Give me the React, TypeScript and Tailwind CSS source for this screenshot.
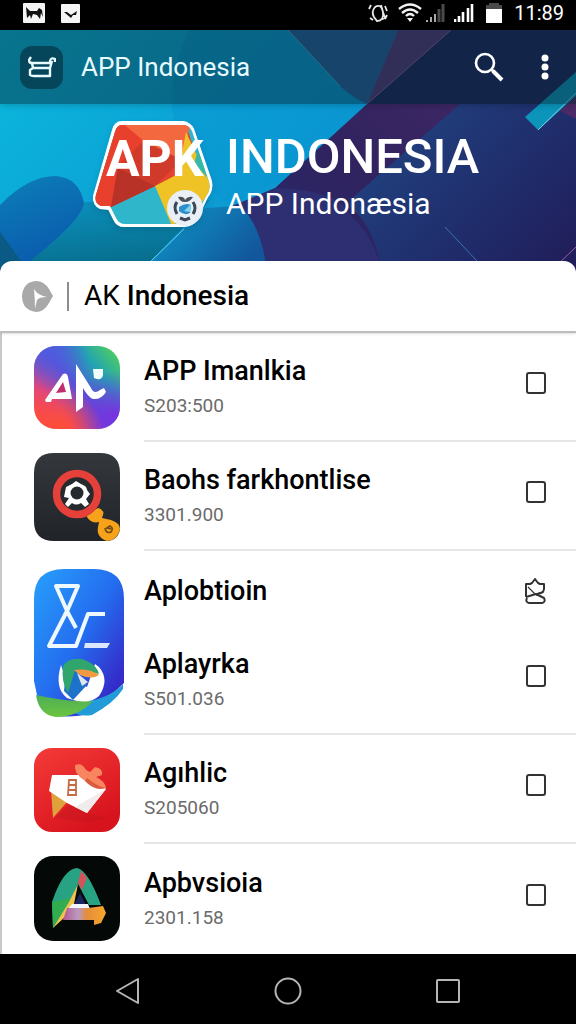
import type { ReactNode } from "react";

const ManLogo = () => (
  <svg viewBox="0 0 86 83" className="w-[86px]" aria-hidden="true">
    <defs>
      <linearGradient id="m1" x1="0" y1="0.9" x2="1" y2="0.1">
        <stop offset="0" stopColor="#ff4a3d" />
        <stop offset="0.25" stopColor="#e0457f" />
        <stop offset="0.5" stopColor="#5a4fd8" />
        <stop offset="0.75" stopColor="#22a3b4" />
        <stop offset="1" stopColor="#4fd05c" />
      </linearGradient>
      <radialGradient id="m2" cx="0.95" cy="0.85" r="0.55">
        <stop offset="0" stopColor="#7a2fe0" />
        <stop offset="1" stopColor="#7a2fe0" stopOpacity="0" />
      </radialGradient>
      <radialGradient id="m3" cx="0.3" cy="1" r="0.5">
        <stop offset="0" stopColor="#ff4f35" />
        <stop offset="1" stopColor="#ff4f35" stopOpacity="0" />
      </radialGradient>
      <radialGradient id="m4" cx="0.15" cy="0.05" r="0.5">
        <stop offset="0" stopColor="#4f5be0" />
        <stop offset="1" stopColor="#4f5be0" stopOpacity="0" />
      </radialGradient>
    </defs>
    <rect width="86" height="83" rx="22" fill="url(#m1)" />
    <rect width="86" height="83" rx="22" fill="url(#m2)" />
    <rect width="86" height="83" rx="22" fill="url(#m3)" />
    <rect width="86" height="83" rx="22" fill="url(#m4)" />
    <path d="M11 54 L29 28 Q33 26 34 31 L38 53 L18 53 L17 56 L12 56 Z" fill="#fff" />
    <path d="M22 47 L32 46 L29 36 Z" fill="#c02d6e" />
    <path d="M42 18 L57 42 Q60 49 66 44 L70 42 L72 46 Q67 54 59 53 Q54 51 49 42 L49 61 L42 66 Z" fill="#fff" />
    <path d="M59 23 L69 23 L69 29 Q68 34 63 33 L60 32 Z" fill="#f2fffc" />
  </svg>
);

const BaohaLogo = () => (
  <svg viewBox="0 0 86 88" className="w-[86px]" aria-hidden="true">
    <defs>
      <linearGradient id="b1" x1="0" y1="0" x2="0" y2="1">
        <stop offset="0" stopColor="#34383c" />
        <stop offset="1" stopColor="#202327" />
      </linearGradient>
    </defs>
    <path d="M20 0 H66 Q86 0 86 20 V76 Q84 88 72 88 H20 Q0 88 0 68 V20 Q0 0 20 0 Z" fill="url(#b1)" />
    <path d="M53 61 L64 55 Q72 57 68 65 L77 67 Q86 70 86 76 Q83 88 73 88 Q62 84 64 74 L65 69 Q57 71 53 64 Z" fill="#f6a21b" />
    <circle cx="43" cy="41" r="20.5" fill="#252a2f" stroke="#e5403a" strokeWidth="7.5" />
    <path d="M38 31 L42 28 L47 31 Q53 33 53 37 L56 41 L52 46 L55 51 L51 54 L47 50 Q42 53 38 50 L34 54 L31 51 L35 45 L30 44 L32 34 Z" fill="#fff" />
    <circle cx="43" cy="40" r="6.5" fill="#252a2f" />
    <path d="M71 75 Q72 81 77 79 Q80 75 76 73 L73 75 L77 76" fill="none" stroke="#704a13" strokeWidth="1.7" />
  </svg>
);

const TallLogo = () => (
  <svg viewBox="0 0 90 148" className="w-[90px]" aria-hidden="true">
    <defs>
      <linearGradient id="t1" x1="0" y1="0" x2="1" y2="1">
        <stop offset="0" stopColor="#27a0fb" />
        <stop offset="0.5" stopColor="#246cef" />
        <stop offset="0.85" stopColor="#352bc8" />
      </linearGradient>
      <linearGradient id="t2" x1="0" y1="0" x2="0" y2="1">
        <stop offset="0" stopColor="#4fae57" />
        <stop offset="1" stopColor="#6bc53f" />
      </linearGradient>
    </defs>
    <path d="M0 30 Q0 0 30 0 H60 Q90 0 90 30 V114 L58 144 Q36 150 18 146 Q4 143 3 126 L0 112 Z" fill="url(#t1)" />
    <path d="M89 115 L89 120 Q80 134 58 146 Q45 148 38 142 L48 133 Q75 130 89 115 Z" fill="#239bd8" />
    <path d="M2 126 Q25 131 42 132 L59 132 Q44 148 22 148 Q5 146 2 126 Z" fill="url(#t2)" />
    <path d="M42 59 L34 44 L22 17 H44 L34 40 L15 77 H42 L54 45 H71" fill="none" stroke="#eef8ff" strokeWidth="4" strokeLinejoin="round" />
    <path d="M51 74 H76 L73 79 H50 Z" fill="#dce7ff" />
    <path d="M27 96 Q20 119 33 129 Q54 137 65 127 Q76 111 65 98 L61 95 L53 118 L30 105 Z" fill="#fff" />
    <path d="M32 101 L41 99 L53 116 L39 131 L30 122 Z" fill="#1e72ca" />
    <path d="M29 97 Q36 87 51 91 Q63 96 65 105 L41 101 L34 124 Q27 113 29 97 Z" fill="#30a56d" />
    <path d="M40 101 Q55 99 65 106 Q58 111 46 106 Z" fill="#f19a42" />
    <path d="M43 104 L54 113 L48 117 Z" fill="#dce7ef" />
  </svg>
);

const RedLogo = () => (
  <svg viewBox="0 0 86 84" className="w-[86px]" aria-hidden="true">
    <defs>
      <linearGradient id="r1" x1="0" y1="0" x2="0.6" y2="1">
        <stop offset="0" stopColor="#f43b38" />
        <stop offset="1" stopColor="#d7131d" />
      </linearGradient>
    </defs>
    <rect width="86" height="84" rx="18" fill="url(#r1)" />
    <path d="M21 70 L35 57 L54 65 L74 70 Q60 76 34 72 Z" fill="#b80f19" opacity="0.3" />
    <path d="M17 42 L34 53 L19 70 Z" fill="#dfa13b" />
    <path d="M18 27 L53 27 L72 41 L53 65 L33 55 L15 43 Z" fill="#fff" />
    <path d="M72 41 L53 65 L41 59 Z" fill="#f1eceb" />
    <path d="M41 17 Q48 14 52 22 L56 24 L61 19 Q69 20 68 27 L62 29 Q71 33 72 40 Q61 44 50 32 Q40 26 41 17 Z" fill="#f8855f" />
    <path d="M53 30 Q63 38 71 40 Q61 43 51 33 Z" fill="#d95c41" />
    <path d="M35 32 H42 V47 H34 Z M35 37 H42 M35 42 H42" fill="none" stroke="#c26b46" strokeWidth="1.8" />
  </svg>
);

const DarkLogo = () => (
  <svg viewBox="0 0 86 85" className="w-[86px]" aria-hidden="true">
    <defs>
      <linearGradient id="d1" x1="0" y1="0" x2="1" y2="0">
        <stop offset="0" stopColor="#b5578c" />
        <stop offset="0.35" stopColor="#b99ac5" />
        <stop offset="0.55" stopColor="#e58d3c" />
        <stop offset="1" stopColor="#f7a72b" />
      </linearGradient>
    </defs>
    <rect width="86" height="85" rx="19" fill="#040806" />
    <path d="M18 46 Q29 13 43 12 Q54 14 67 49 H55 L44 28 L34 50 L19 72 Z" fill="#27a282" />
    <path d="M18 46 L38 42 L19 72 Z" fill="#31ac4f" />
    <path d="M44 28 L40 48 L31 61 L19 72 L35 46 Z" fill="#f1c34b" />
    <path d="M44 27 L47 15 L53 22 L48 34 Z" fill="#d5525a" />
    <path d="M46 37 L52 49 H40 Z" fill="#1b2460" />
    <path d="M38 48 H54 L56 53 H34 Z" fill="#f2f5ff" />
    <path d="M33 52 H54 L69 50 L72 57 L67 67 L60 69 V64 H29 Z" fill="url(#d1)" />
  </svg>
);

const Backdrop = () => (
  <svg
    viewBox="0 30 576 243"
    preserveAspectRatio="xMidYMid slice"
    className="absolute inset-0 h-full w-full"
    aria-hidden="true"
  >
    <defs>
      <linearGradient id="cy" x1="0" y1="0" x2="1" y2="0.4">
        <stop offset="0" stopColor="#0bb9dd" />
        <stop offset="0.6" stopColor="#0c9ad2" />
        <stop offset="1" stopColor="#0a86c0" />
      </linearGradient>
      <linearGradient id="nv" x1="0" y1="0" x2="1" y2="1">
        <stop offset="0" stopColor="#22508c" />
        <stop offset="0.6" stopColor="#20306f" />
        <stop offset="1" stopColor="#201c58" />
      </linearGradient>
      <linearGradient id="pp" x1="1" y1="0" x2="0" y2="1">
        <stop offset="0" stopColor="#4a2b69" />
        <stop offset="0.6" stopColor="#30235f" />
        <stop offset="1" stopColor="#232a6c" />
      </linearGradient>
      <linearGradient id="bl" x1="0" y1="0" x2="0.4" y2="1">
        <stop offset="0" stopColor="#0b7fb8" />
        <stop offset="1" stopColor="#0b5bad" />
      </linearGradient>
      <linearGradient id="tl" x1="0" y1="0" x2="0.3" y2="1">
        <stop offset="0" stopColor="#0b8fbd" />
        <stop offset="1" stopColor="#066079" />
      </linearGradient>
      <linearGradient id="md" x1="0" y1="0" x2="1" y2="0.5">
        <stop offset="0" stopColor="#0da0d0" />
        <stop offset="1" stopColor="#12579b" />
      </linearGradient>
    </defs>
    <rect y="30" width="576" height="243" fill="url(#cy)" />
    <path d="M172 104 Q176 170 230 205 L300 170 L367 104 L288 30 H190 Q172 60 172 104 Z" fill="#0895d2" opacity="0.5" />
    <path d="M60 200 L84 202 L210 200 L151 261 L140 273 H0 Z" fill="url(#tl)" opacity="0.8" />
    <path d="M0 205 Q28 176 56 176 Q80 178 84 204 Q80 222 24 266 L0 238 Z" fill="url(#bl)" />
    <path d="M0 232 L30 273 H0 Z" fill="#0a5a85" />
    <path d="M367 104 L451 30 H576 V273 H230 L236 206 L275 188 Z" fill="url(#pp)" />
    <path d="M230 273 L232 206 L275 188 Q340 190 350 215 Q374 235 382 273 Z" fill="#2d2f72" />
    <path d="M350 200 L405 152 L460 104 L535 30 H576 V273 H382 Q374 224 350 208 Z" fill="url(#nv)" />
    <path d="M140 273 L205 208 L240 206 Q262 226 267 273 Z" fill="url(#md)" />
    <path d="M288 30 L340 86 Q353 98 367 104 L398 30 Z" fill="#27619f" />
    <path d="M398 30 L367 104 L451 30 Z" fill="#563a7a" />
    <path d="M451 30 L367 104 H576 V30 Z" fill="#1e2860" />
    <path d="M576 72 L525 117 L538 130 L576 96 Z" fill="#0c94bb" />
    <path d="M576 96 L560 111 L576 119 Z" fill="#4b2a65" />
    <path d="M538 130 L576 93" stroke="#7bd3ee" strokeWidth="1" />
    <path d="M288 30 L340 86" stroke="#4aa6c9" strokeWidth="1" />
    <path d="M451 30 L367 104" stroke="#8c60a0" strokeWidth="1" />
    <path d="M151 261 L184 229" stroke="#63cdf0" strokeWidth="1" />
    <path d="M445 227 L477 261" stroke="#3a73b4" strokeWidth="1" />
    <path d="M558 264 L576 247" stroke="#a05c9c" strokeWidth="1" />
  </svg>
);

const BannerLogo = () => (
  <svg viewBox="90 118 126 112" className="w-[126px] shrink-0 drop-shadow-md" role="img" aria-label="APK">
    <defs>
      <clipPath id="badge">
        <path d="M122 125 H183 Q189 125 192 131 L209 182 Q211 190 206 196 L195 219 Q191 224 184 224 H125 Q119 224 116 218 L110 206 L101 206 Q94 203 96 195 L115 132 Q117 125 122 125 Z" />
      </clipPath>
    </defs>
    <path
      d="M122 122 H183 Q190 123 193 129 L211 181 Q213 190 207 197 L196 220 Q192 226 184 226 H124 Q117 226 114 219 L109 209 L100 208 Q93 204 94 196 L113 130 Q115 122 122 122 Z"
      fill="#fff"
      stroke="#fff"
      strokeWidth="2"
    />
    <g clipPath="url(#badge)">
      <rect x="90" y="118" width="126" height="112" fill="#2fb6cb" />
      <path d="M116 118 L90 210 L111 207 L155 186 L200 168 L184 118 Z" fill="#e3432f" />
      <path d="M118 126 L144 141 L144 166 L182 160 L192 118 H118 Z" fill="#f4683f" />
      <path d="M113 160 L144 141 L182 160 L155 186 L111 207 Z" fill="#cf3a2b" />
      <path d="M116 118 L90 210 L111 207 L118 165 L144 141 Z" fill="#e8402c" />
      <path d="M118 168 L155 186 L111 207 Z" fill="#b93227" />
      <path d="M186 132 L178 174 L155 186 L172 226 L214 192 Z" fill="#efc225" />
      <path d="M198 150 L194 164 L208 178 Z" fill="#38b9a8" />
    </g>
    <text x="106" y="176" fill="#fff" fontFamily="Roboto, sans-serif" fontWeight="700" fontSize="50">
      APK
    </text>
    <circle cx="185" cy="208" r="18" fill="#e9eff5" />
    <path d="M177 202 Q173 207 177 214 M193 202 Q197 208 193 214 M180 218 L185 220 L190 218" fill="none" stroke="#3b4858" strokeWidth="3" />
    <path d="M179 207 Q186 202 191 205 L190 213 Q184 216 179 211 Z" fill="#2f8fca" />
    <path d="M184 211 L191 204 L190 212 Z" fill="#7fd4ef" />
    <path d="M178 197 Q184 196 185 200 Q188 196 193 197 Q190 202 185 202 Q180 202 178 197 Z" fill="#4b4f58" />
  </svg>
);

const StatusBar = () => (
  <div className="flex h-[30px] items-center justify-between bg-black pr-3 pl-[23px] text-white">
    <div className="flex items-center gap-4 pb-1">
      <svg viewBox="0 0 22 20" className="w-[22px]" aria-hidden="true">
        <rect width="22" height="20" rx="1" fill="#f5f5f5" />
        <path d="M3 4 L7 8 L14 8 L16 5 L19 7 L20 14 L18 10 L17 16 L14 12 L10 11 L8 16 L7 12 L4 15 Z" fill="#111" />
      </svg>
      <svg viewBox="0 0 19 19" className="w-[19px]" aria-hidden="true">
        <rect width="19" height="19" rx="1" fill="#f5f5f5" />
        <path d="M3 8 L6 8 L10 11 L16 7 L15 11 L12 11 L10 14 Z" fill="#111" />
      </svg>
    </div>
    <div className="flex items-center pb-1">
      <svg viewBox="0 0 20 20" className="w-5" aria-hidden="true">
        <path d="M7 4 Q3 9 6 14 L9 18 Q16 18 15 9 L13 2 M7 4 Q12 1 14 6 L17 15 L12 17 M3 2 L1 6 M2 15 L5 17 M17 3 L19 8 M19 12 L17 16" fill="none" stroke="#e8e8e8" strokeWidth="1.8" />
      </svg>
      <svg viewBox="0 0 24 20" className="ml-[10px] w-6" aria-hidden="true">
        <path d="M1 6 Q12 -3 23 6 M4 10 Q12 3 20 10 M8 13 Q12 9 16 13" fill="none" stroke="#f2f2f2" strokeWidth="2.4" />
        <path d="M9 15 H15 L12 19 Z" fill="#f2f2f2" />
      </svg>
      <svg viewBox="0 0 20 20" className="ml-1 w-5" aria-hidden="true">
        <path d="M1 19 V17 M5 19 V14 M9 19 V11" stroke="#aaa" strokeWidth="2" />
        <path d="M13 19 V6 M17 19 V1" stroke="#4b4b4b" strokeWidth="3" />
      </svg>
      <svg viewBox="0 0 20 20" className="ml-2 w-5" aria-hidden="true">
        <path d="M1 19 V16 M5 19 V13 M9 19 V9 M14 19 V5 M18 19 V1" stroke="#fff" strokeWidth="2.6" />
      </svg>
      <svg viewBox="0 0 16 20" className="ml-3 w-4" aria-hidden="true">
        <path d="M3 0 H13 V2 H16 V6 H0 V2 H3 Z" fill="#4a4a4a" />
        <rect y="6" width="16" height="14" fill="#fff" />
      </svg>
      <span className="ml-3 text-[20px] leading-6">11:89</span>
    </div>
  </div>
);

const Header = () => (
  <header className="relative overflow-hidden text-white">
    <Backdrop />
    <div className="relative flex h-[74px] items-center bg-[#04212c]/45 pr-[18px] pl-5 shadow-md">
      <button type="button" aria-label="Menu" className="flex size-[43px] items-center justify-center rounded-xl bg-[#06465a]">
        <svg viewBox="0 0 28 22" className="w-7" fill="none" stroke="#e8fbff" strokeWidth="2.4" strokeLinejoin="round" aria-hidden="true">
          <path d="M3 1 L1 4 Q1 7 4 7 H22 V5 Q23 1 27 3 V6 M4 7 L5 12 H22 L24 5 M5 12 L2 14 V19 Q3 20 6 20 H22 V12" />
        </svg>
      </button>
      <span className="ml-[18px] flex-1 text-[26px] leading-8 text-[#e8fbff]">APP Indonesia</span>
      <button type="button" aria-label="Search" className="p-1">
        <svg viewBox="0 0 30 30" className="w-[30px]" fill="none" stroke="#fff" aria-hidden="true">
          <circle cx="11" cy="11" r="9" strokeWidth="2.6" />
          <path d="M17 17 L20 20" strokeWidth="3" />
          <path d="M19 19 L28 28" strokeWidth="4" />
        </svg>
      </button>
      <button type="button" aria-label="More options" className="ml-6 p-2">
        <svg viewBox="0 0 10 28" className="w-[10px]" fill="#fff" aria-hidden="true">
          <circle cx="5" cy="5" r="3.5" />
          <circle cx="5" cy="14" r="3.5" />
          <circle cx="5" cy="23" r="3.5" />
        </svg>
      </button>
    </div>
    <div className="relative flex gap-[10px] pt-[14px] pb-[43px] pl-[90px]">
      <BannerLogo />
      <div className="pt-[10px]">
        <h1 className="text-[49px] leading-[58px] font-medium">INDONESIA</h1>
        <p className="text-[30px] leading-9">APP Indonæsia</p>
      </div>
    </div>
  </header>
);

const RowText = ({ id, title, price }: { id: string; title: string; price: string }) => (
  <label htmlFor={id} className="flex-1">
    <span className="block text-[27px] leading-[38px] font-medium text-black">{title}</span>
    <span className="block text-[19px] leading-8 text-[#6b6b6b]">{price}</span>
  </label>
);

const Tick = ({ id }: { id: string }) => (
  <input
    id={id}
    type="checkbox"
    className="mb-2 h-[22px] w-5 appearance-none rounded-[3px] border-2 border-[#333] checked:bg-[#333]"
  />
);

const AppRow = ({ id, title, price, icon }: { id: string; title: string; price: string; icon: ReactNode }) => (
  <li className="group flex min-h-[109px] gap-5 pl-8">
    <div className="flex w-[90px] shrink-0 items-center">{icon}</div>
    <div className="flex flex-1 items-center border-b-2 border-[#e6e6e6] pr-[30px] group-last:border-b-0">
      <RowText id={id} title={title} price={price} />
      <Tick id={id} />
    </div>
  </li>
);

export default function App() {
  return (
    <div className="flex min-h-screen flex-col bg-white font-[Roboto,sans-serif]">
      <StatusBar />
      <Header />
      <div className="relative z-10 -mt-3 flex h-[72px] items-center rounded-t-xl border-b-2 border-[#bdbdbd] bg-white pl-[22px] shadow-sm">
        <svg viewBox="0 0 31 31" className="w-[31px]" aria-hidden="true">
          <path d="M14 0 Q22 0 27 8 L31 15 L27 22 Q22 31 14 31 Q0 29 0 15 Q1 1 14 0 Z" fill="#a9a9a9" />
          <path d="M12 8 Q15 14 25 16 Q17 16 15 19 L13 28 Q13 18 12 8 Z" fill="#fff" />
        </svg>
        <div className="mr-[15px] ml-[14px] h-[29px] w-[2px] bg-[#8d8d8d]" />
        <h2 className="text-[28px] leading-8 text-black">
          AK <span className="font-medium">Indonesia</span>
        </h2>
      </div>

      <ul className="grow border-l-2 border-[#c9c9c9]">
        <AppRow id="imanlkia" title="APP Imanlkia" price="S203:500" icon={<ManLogo />} />
        <AppRow id="baohs" title="Baohs farkhontlise" price="3301.900" icon={<BaohaLogo />} />
        <li className="flex gap-5 pl-8">
          <div className="flex w-[90px] shrink-0 items-center">
            <TallLogo />
          </div>
          <div className="flex-1 border-b-2 border-[#e6e6e6] pr-[30px]">
            <div className="flex h-[75px] items-center pt-1">
              <span className="flex-1 text-[27px] leading-[38px] font-medium text-black">Aplobtioin</span>
              <button type="button" aria-label="Aplobtioin">
                <svg viewBox="0 0 21 26" className="w-[21px]" fill="none" stroke="#333" strokeWidth="2" strokeLinejoin="round" aria-hidden="true">
                  <path d="M1 19 V6 H5 L7 5 L10 1 L13 5 L15 6 H19 V11 L18 14 L11 17 M1 19 L11 16 L19 20 Q21 24 17 25 H4 Q0 24 2 20" />
                  <path d="M3 9 L10 16 L18 14" strokeWidth="1.2" />
                </svg>
              </button>
            </div>
            <div className="flex h-[107px] items-center">
              <RowText id="aplayrka" title="Aplayrka" price="S501.036" />
              <Tick id="aplayrka" />
            </div>
          </div>
        </li>
        <AppRow id="agihlic" title="Agıhlic" price="S205060" icon={<RedLogo />} />
        <AppRow id="apbvsioia" title="Apbvsioia" price="2301.158" icon={<DarkLogo />} />
      </ul>

      <nav className="flex h-[70px] items-center justify-between bg-black px-28 pt-1">
        <button type="button" aria-label="Back" className="flex w-8 justify-center">
          <svg viewBox="0 0 24 28" className="w-6" fill="none" stroke="#b5b5b5" strokeWidth="2" strokeLinejoin="round" aria-hidden="true">
            <path d="M22 2 V26 L1 14 Z" />
          </svg>
        </button>
        <button type="button" aria-label="Home" className="flex w-8 justify-center">
          <svg viewBox="0 0 28 28" className="w-7" fill="none" stroke="#b5b5b5" strokeWidth="2" aria-hidden="true">
            <circle cx="14" cy="14" r="12.5" />
          </svg>
        </button>
        <button type="button" aria-label="Recent apps" className="flex w-8 justify-center">
          <svg viewBox="0 0 24 24" className="w-6" fill="none" stroke="#b5b5b5" strokeWidth="2" aria-hidden="true">
            <rect x="1" y="1" width="22" height="22" rx="1" />
          </svg>
        </button>
      </nav>
    </div>
  );
}
